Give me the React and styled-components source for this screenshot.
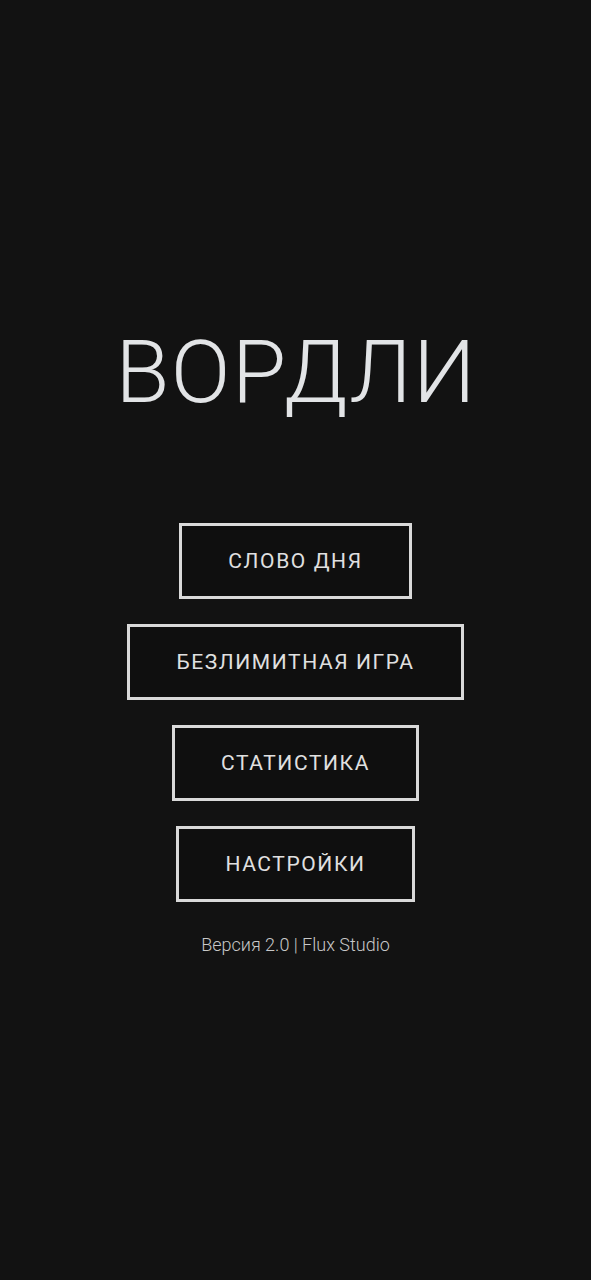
import React from "react";
import styled, { createGlobalStyle } from "styled-components";

const Global = createGlobalStyle`
  html, body { margin: 0; padding: 0; background: #121212; }
  body { font-family: Roboto, "Noto Sans", sans-serif; }
`;

const Screen = styled.main`
  min-height: 100vh;
  box-sizing: border-box;
  display: flex;
  flex-direction: column;
  align-items: center;
  justify-content: center;
  padding-bottom: 4px;
  background: #121212;
`;

const Title = styled.h1`
  margin: 0 0 101px;
  padding-left: 1.5px;
  font-family: Roboto, sans-serif;
  font-weight: 300;
  font-size: 88px;
  line-height: 100px;
  letter-spacing: 1.5px;
  color: #e2e4e6;
`;

const Menu = styled.nav`
  display: flex;
  flex-direction: column;
  align-items: center;
  gap: 25px;
`;

const MenuButton = styled.button`
  box-sizing: border-box;
  height: 76px;
  padding: 0 46px;
  background: #0f0f0f;
  border: 3px solid #d9d9d9;
  color: #e0e0e0;
  font-family: Roboto, sans-serif;
  font-weight: 400;
  font-size: 21px;
  letter-spacing: 1.6px;
  text-transform: uppercase;
  cursor: pointer;
`;

const Footer = styled.p`
  margin: 32px 0 0;
  font-family: Roboto, sans-serif;
  font-weight: 300;
  font-size: 18px;
  color: #c8c8c8;
`;

const items = ["СЛОВО ДНЯ", "БЕЗЛИМИТНАЯ ИГРА", "СТАТИСТИКА", "НАСТРОЙКИ"];

export default function App() {
  return (
    <>
      <Global />
      <Screen>
        <Title>ВОРДЛИ</Title>
        <Menu>
          {items.map((t) => (
            <MenuButton key={t}>{t}</MenuButton>
          ))}
        </Menu>
        <Footer>Версия 2.0 | Flux Studio</Footer>
      </Screen>
    </>
  );
}
